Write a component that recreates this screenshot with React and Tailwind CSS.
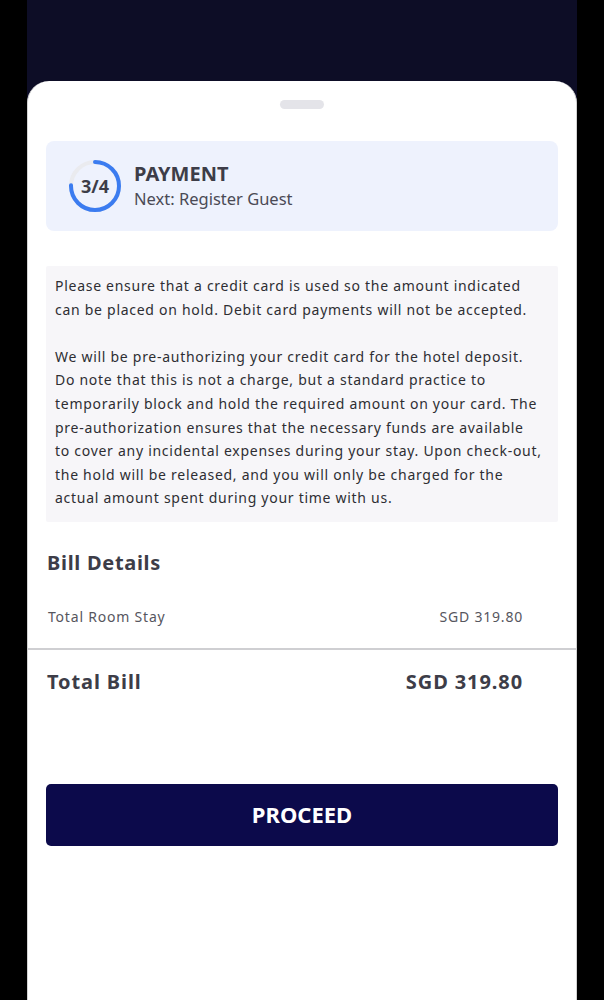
const infoLines1 = [
  "Please ensure that a credit card is used so the amount indicated",
  "can be placed on hold. Debit card payments will not be accepted.",
];

const infoLines2 = [
  "We will be pre-authorizing your credit card for the hotel deposit.",
  "Do note that this is not a charge, but a standard practice to",
  "temporarily block and hold the required amount on your card. The",
  "pre-authorization ensures that the necessary funds are available",
  "to cover any incidental expenses during your stay. Upon check-out,",
  "the hold will be released, and you will only be charged for the",
  "actual amount spent during your time with us.",
];

const StepRing = () => {
  const r = 24;
  const c = 2 * Math.PI * r;
  return (
    <div className="relative w-[56px] h-[56px] shrink-0">
      <svg width="56" height="56" viewBox="0 0 56 56" className="absolute inset-0">
        <circle cx="28" cy="28" r={r} fill="none" stroke="#eaebef" strokeWidth="4" />
        <circle
          cx="28"
          cy="28"
          r={r}
          fill="none"
          stroke="#3b7cf0"
          strokeWidth="4"
          strokeLinecap="round"
          strokeDasharray={`${c * 0.75} ${c}`}
          transform="rotate(-90 28 28)"
        />
      </svg>
      <div className="absolute inset-0 flex items-center justify-center text-[18px] font-bold text-[#3d3d48]">
        3/4
      </div>
    </div>
  );
};

const App = () => {
  return (
    <div className="min-h-[1000px] bg-black flex justify-center font-['Noto_Sans',sans-serif]">
      <div className="w-[550px] bg-[#0d0d26] pt-[81px] flex flex-col">
        <div className="flex-1 bg-white rounded-t-[22px] border-x border-[#d2d2d2] flex flex-col">
          {/* handle */}
          <div className="flex justify-center pt-[19px]">
            <div className="w-[44px] h-[9px] rounded-full bg-[#e4e4e9]" />
          </div>

          <div className="px-[18px]">
            {/* step card */}
            <div className="mt-[32px] h-[90px] rounded-[8px] bg-[#eef2fd] flex items-center pl-[21px] gap-[11px]">
              <StepRing />
              <div className="flex flex-col">
                <span className="text-[20px] leading-[26px] font-bold text-[#3d3d48]">PAYMENT</span>
                <span className="text-[16.5px] leading-[24px] text-[#4a4a55]">Next: Register Guest</span>
              </div>
            </div>

            {/* info */}
            <div className="mt-[35px] bg-[#f7f6f9] rounded-[2px] pl-[9px] pt-[8px] pb-[12px] text-[14px] leading-[23.6px] tracking-[0.72px] text-[#2e2e33]">
              {infoLines1.map((l) => (
                <div key={l} className="whitespace-nowrap">{l}</div>
              ))}
              <div className="h-[23.6px]" />
              {infoLines2.map((l) => (
                <div key={l} className="whitespace-nowrap">{l}</div>
              ))}
            </div>

            {/* bill */}
            <div className="mt-[27px] pl-px text-[20px] leading-[28px] font-bold tracking-[0.7px] text-[#3d3d48]">
              Bill Details
            </div>
            <div className="mt-[30px] flex justify-between pl-[2px] pr-[35px] text-[14px] leading-[20px] tracking-[0.8px] text-[#56565e]">
              <span>Total Room Stay</span>
              <span>SGD 319.80</span>
            </div>
          </div>

          <div className="mt-[21px] h-[2px] bg-[#cfcfd2]" />

          <div className="px-[18px]">
            <div className="mt-[18px] flex justify-between pl-px pr-[35px] text-[20px] leading-[28px] font-bold tracking-[0.9px] text-[#3d3d48]">
              <span>Total Bill</span>
              <span>SGD 319.80</span>
            </div>

            <button className="mt-[88px] w-full h-[62px] rounded-[5px] bg-[#0c0a4b] text-white text-[22px] font-bold flex items-center justify-center">
              PROCEED
            </button>
          </div>
        </div>
      </div>
    </div>
  );
};

export default App;
